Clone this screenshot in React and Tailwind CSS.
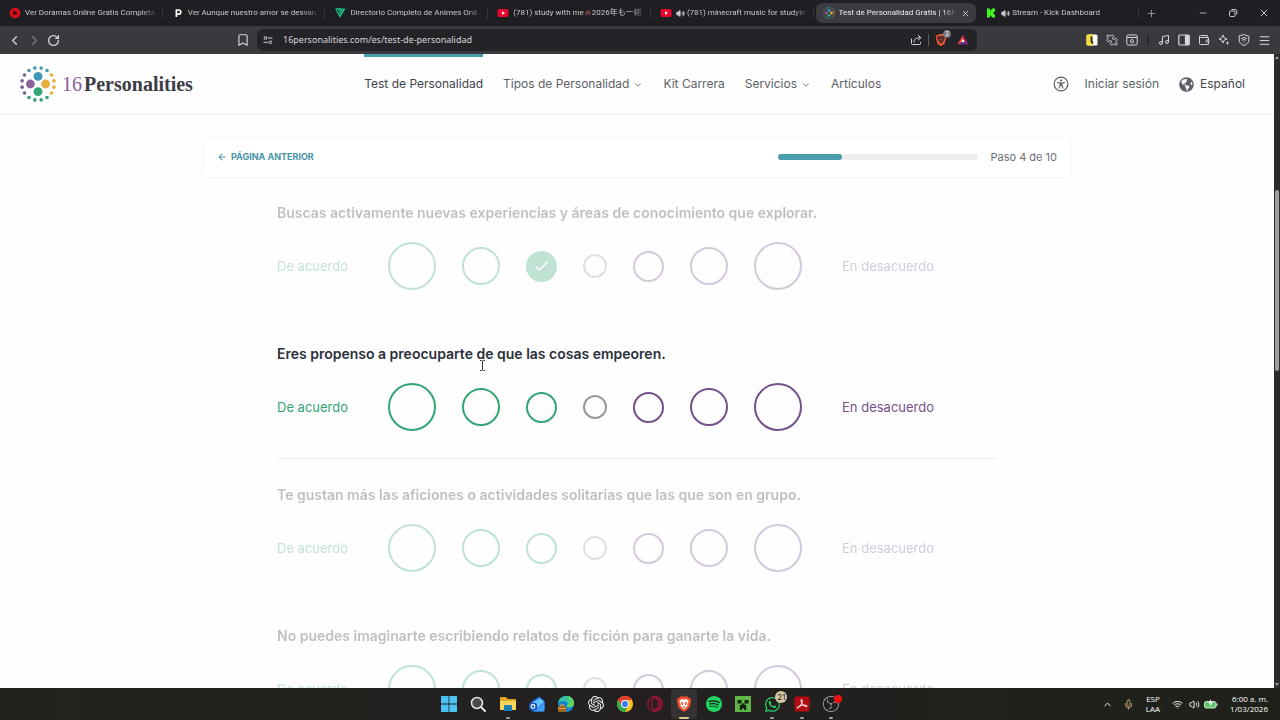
import {
  ArrowLeft, Bookmark, Check, ChevronDown, ChevronLeft, ChevronRight, ChevronUp, Menu, Mic, Minus,
  Music, Plus, Puzzle, RotateCw, Sparkles, Volume2, Wallet, Wifi, X,
} from 'lucide-react';
import { FaGlobeAmericas, FaWhatsapp } from 'react-icons/fa';
import { SiBrave, SiObsstudio, SiOpenai, SiSpotify } from 'react-icons/si';

const LogoMark = ({ className }) => {
  const colors = ['#4298b4', '#4298b4', '#e4ae3a', '#e4ae3a', '#e4ae3a', '#e4ae3a', '#33a474', '#33a474',
    '#33a474', '#33a474', '#7d5b8f', '#7d5b8f', '#7d5b8f', '#7d5b8f', '#4298b4', '#4298b4'];
  return (
    <svg viewBox="0 0 36 36" className={className} aria-hidden="true">
      {colors.map((color, i) => {
        const angle = ((i + 0.5) * Math.PI) / 8;
        return <circle key={i} cx={18 + 16.2 * Math.sin(angle)} cy={18 - 16.2 * Math.cos(angle)} r="1.8" fill={color} />;
      })}
      <circle cx="18" cy="10.4" r="4.4" fill="#4298b4" />
      <circle cx="10.4" cy="18" r="4.4" fill="#88619a" />
      <circle cx="25.6" cy="18" r="4.4" fill="#e4ae3a" />
      <circle cx="18" cy="25.6" r="4.4" fill="#33a474" />
    </svg>
  );
};

const YouTubeIcon = () => (
  <svg viewBox="0 0 12 12" className="size-3 shrink-0">
    <rect x="0.5" y="2" width="11" height="8" rx="2" fill="#e8052e" />
    <path d="M5 4.3v3.4L8 6z" fill="#fff" />
  </svg>
);

const DoramasIcon = () => (
  <svg viewBox="0 0 12 12" className="size-3 shrink-0">
    <circle cx="6" cy="6" r="5.3" fill="#d90f17" />
    <path d="M4.3 3.3v5.4L8.8 6z" fill="#3a0508" />
  </svg>
);

const LetterIcon = () => (
  <svg viewBox="0 0 12 12" className="size-3 shrink-0">
    <path d="M4.4 10V3h2.3a2 2 0 0 1 0 4.2H4.6" fill="none" stroke="#fff" strokeWidth="1.7" />
  </svg>
);

const AnimeIcon = () => (
  <svg viewBox="0 0 12 12" className="size-3 shrink-0">
    <path d="M1.5 2h5L5 4.5M2.5 3.5L6 9.5l4.3-7.3H8.3L5.5 7" fill="none" stroke="#19d08f" strokeWidth="1.3" />
  </svg>
);

const KickIcon = () => (
  <svg viewBox="0 0 12 12" className="size-3 shrink-0">
    <path d="M2 1.5h3v2h1v-1h1v-1h3v3H9v1H8v1h1v1h1v3H7v-1H6v-1H5v2H2z" fill="#3dfa1c" />
  </svg>
);

const tabs = [
  { icon: <DoramasIcon />, title: 'Ver Doramas Online Gratis Completa' },
  { icon: <LetterIcon />, title: 'Ver Aunque nuestro amor se desvan' },
  { icon: <AnimeIcon />, title: 'Directorio Completo de Animes Onli' },
  { icon: <YouTubeIcon />, title: '(781) study with me', extra: '2026年も一緒' },
  { icon: <YouTubeIcon />, title: '(781) minecraft music for studyin', sound: true },
  { icon: <LogoMark className="size-3 shrink-0" />, title: 'Test de Personalidad Gratis | 16P', active: true },
  { icon: <KickIcon />, title: 'Stream - Kick Dashboard', sound: true },
];

const TabStrip = () => (
  <div className="flex h-[26px] shrink-0 items-center bg-[#1f1e23] text-[#c9c9cc]">
    <div className="flex min-w-0 flex-1">
      {tabs.map((tab) => (
        <div key={tab.title} className="min-w-0 flex-1 pl-0.5">
          <div className={`flex h-5 items-center gap-1 rounded-md pl-[7px] ${tab.active ? 'bg-[#3c3b41] pr-1.5 text-[#eeeeee]' : ''}`}>
            {tab.icon}
            <button
              type="button"
              className="flex min-w-0 flex-1 items-center overflow-hidden whitespace-nowrap text-left font-['Roboto','Noto_Sans_CJK_JP',sans-serif] text-[8px] leading-3 [mask-image:linear-gradient(to_right,black_88%,transparent)]"
            >
              {tab.sound && <Volume2 size={9} fill="currentColor" className="mr-0.5 shrink-0" />}
              {tab.title}
              {tab.extra && (
                <>
                  <svg viewBox="0 0 9 9" className="size-2 shrink-0">
                    <path d="M1 4l3-2 2-1 1 2 1 2-2 1v2H5V6H3v2H2z" fill="#6d3b3b" />
                  </svg>
                  {tab.extra}
                </>
              )}
            </button>
            {tab.active ? <X size={9} className="shrink-0" /> : <span className="h-3 w-px shrink-0 bg-[#34343a]" />}
          </div>
        </div>
      ))}
    </div>
    <div className="flex w-[141px] shrink-0 items-center pl-[7px] pr-2.5">
      <button type="button" aria-label="Nueva pestaña" className="text-[#9a9a9e]"><Plus size={11} strokeWidth={2} /></button>
      <div className="ml-auto flex items-center gap-5">
        <button type="button" aria-label="Minimizar"><Minus size={10} strokeWidth={2} /></button>
        <button type="button" aria-label="Restaurar">
          <svg viewBox="0 0 10 10" className="size-2.5" fill="none" stroke="currentColor">
            <rect x="1.5" y="3" width="5.5" height="5.5" rx="1" />
            <path d="M3.5 1.5h3.5a1.8 1.8 0 0 1 1.8 1.8v3.2" />
          </svg>
        </button>
        <button type="button" aria-label="Cerrar"><X size={12} strokeWidth={2} /></button>
      </div>
    </div>
  </div>
);

const Toolbar = () => (
  <div className="flex h-7 shrink-0 items-center bg-[#3a393e] text-[#d6d6d9]">
    <div className="flex w-[257px] shrink-0 items-center gap-[5px] px-[7px]">
      <button type="button" aria-label="Atrás"><ChevronLeft size={15} /></button>
      <button type="button" aria-label="Adelante" className="text-[#7b7b80]"><ChevronRight size={15} /></button>
      <button type="button" aria-label="Recargar"><RotateCw size={13} strokeWidth={2.4} /></button>
      <button type="button" aria-label="Marcador" className="ml-auto"><Bookmark size={14} /></button>
    </div>
    <div className="flex h-[22px] min-w-0 flex-1 items-center rounded-md bg-[#242328] pl-1.5 pr-2">
      <svg viewBox="0 0 10 10" className="size-2.5 shrink-0" fill="none" stroke="currentColor">
        <circle cx="2.5" cy="3" r="1.4" />
        <path d="M5 3h4.5M0.5 7.3H5" />
        <circle cx="7.4" cy="7.3" r="1.4" />
      </svg>
      <input
        type="text"
        aria-label="Dirección"
        defaultValue="16personalities.com/es/test-de-personalidad"
        className="ml-2.5 min-w-0 flex-1 bg-transparent font-['Noto_Sans',sans-serif] text-[9px] leading-3 outline-none"
      />
      <div className="flex items-center gap-1.5">
        <button type="button" aria-label="Compartir">
          <svg viewBox="0 0 12 12" className="size-3" fill="none" stroke="currentColor" strokeLinecap="round" strokeLinejoin="round">
            <path d="M1.5 5v4.5a1 1 0 0 0 1 1h7a1 1 0 0 0 1-1V8.5M4 8c0-3 2-4.3 6.5-4.3M8.3 1.3l2.5 2.4-2.5 2.3" />
          </svg>
        </button>
        <span className="h-3 w-px bg-[#5a5a60]" />
        <button type="button" aria-label="Brave Shields" className="relative mr-1 text-[#f0582d]">
          <SiBrave size={12} />
          <span className="absolute -right-1 -top-1 flex size-2 items-center justify-center rounded-full bg-[#77777c] text-[6px] leading-none text-white">2</span>
        </button>
        <button type="button" aria-label="Brave Rewards">
          <svg viewBox="0 0 12 12" className="size-3">
            <path d="M6 1L0.5 10.5h11z" fill="#662d91" />
            <path d="M6 1L0.5 10.5 6 7.3z" fill="#ff4724" />
            <path d="M6 1v6.3l5.5 3.2z" fill="#9e1f63" />
            <path d="M6 5l-1.8 3h3.6z" fill="#fff" />
          </svg>
        </button>
      </div>
    </div>
    <div className="flex w-[303px] shrink-0 items-center justify-end gap-2 pr-[9px]">
      <button type="button" aria-label="Extensión">
        <svg viewBox="0 0 12 12" className="size-3">
          <rect x="0.5" y="0.5" width="11" height="11" rx="1.5" fill="#fff" />
          <path d="M2 0.5h5v11H2A1.5 1.5 0 0 1 .5 10V2A1.5 1.5 0 0 1 2 .5z" fill="#f4df35" />
          <path d="M5.5 2.5v5.2L7 9.3" fill="none" stroke="#222" strokeWidth="1.8" />
        </svg>
      </button>
      <button type="button" aria-label="Extensiones">
        <Puzzle size={12} className="-scale-x-100" />
      </button>
      <button type="button" aria-label="Buscar pestañas">
        <svg viewBox="0 0 12 12" className="size-3" fill="none" stroke="currentColor">
          <rect x="0.8" y="1" width="10.4" height="10" rx="1.5" />
          <path d="M1 3.5h10M7 8.2l1.2 1.2" />
          <circle cx="5.8" cy="7" r="1.5" />
        </svg>
      </button>
      <span className="mx-px h-3 w-0.5 bg-[#2b2b30]" />
      <button type="button" aria-label="Música"><Music size={12} /></button>
      <button type="button" aria-label="Panel lateral">
        <svg viewBox="0 0 12 12" className="size-3" fill="none" stroke="currentColor" strokeWidth="1.2">
          <rect x="0.8" y="1" width="10.4" height="10" rx="1" />
          <path d="M7.5 1.5h3.2v9H7.5z" fill="currentColor" />
        </svg>
      </button>
      <button type="button" aria-label="Billetera"><Wallet size={12} /></button>
      <button type="button" aria-label="Leo">
        <svg viewBox="0 0 12 12" className="size-3" fill="none" stroke="currentColor" strokeLinejoin="round">
          <path d="M5 1l1.2 2.800L9 5 6.200 6.200 5 9 3.800 6.200 1 5l2.800-1.200z" />
          <path d="M9.500 6.800l.6 1.600 1.600.6-1.600.6-.6 1.600-.6-1.600-1.600-.6 1.600-.6z" fill="currentColor" stroke="none" />
        </svg>
      </button>
      <button type="button" aria-label="VPN">
        <svg viewBox="0 0 12 12" className="size-3" fill="none" stroke="currentColor" strokeLinecap="round">
          <path d="M6 0.7l4.8 1.5v4c0 2.5-2.2 4.2-4.8 5.3C3.4 10.4 1.2 8.7 1.2 6.2v-4z" />
          <path d="M3.3 4.5c1.7-1.2 3.7-1.2 5.4 0M4.3 6.2c1.1-.8 2.3-.8 3.4 0M6 8v.1" />
        </svg>
      </button>
      <button type="button" aria-label="Menú"><Menu size={13} /></button>
    </div>
  </div>
);

const navItems = [
  { label: 'Test de Personalidad', active: true },
  { label: 'Tipos de Personalidad', menu: true },
  { label: 'Kit Carrera' },
  { label: 'Servicios', menu: true },
  { label: 'Artículos' },
];

const SiteHeader = () => (
  <header className="flex h-[61px] items-stretch justify-between border-b border-[#f1f1f2] pl-5 pr-[29px] text-[12px] leading-5 text-[#5c5f66]">
    <a href="#inicio" className="flex items-center gap-[6px]">
      <LogoMark className="size-9" />
      <span className="font-['Liberation_Serif',serif] text-[20px] font-bold leading-6 text-[#3c3c46]">
        <span className="mr-0.5 font-normal text-[#88619a]">16</span>
        Personalities
      </span>
    </a>
    <nav className="flex gap-5">
      {navItems.map((item) => (
        <a
          key={item.label}
          href="#nav"
          className={`flex items-center gap-1 border-y-3 border-b-transparent ${item.active ? 'border-t-[#4a9dab] text-[#40434b]' : 'border-t-transparent'}`}
        >
          {item.label}
          {item.menu && <ChevronDown size={10} className="mt-0.5" />}
        </a>
      ))}
    </nav>
    <div className="flex items-center gap-4">
      <button type="button" aria-label="Accesibilidad">
        <svg viewBox="0 0 16 16" className="size-4" fill="none" stroke="currentColor" strokeLinecap="round">
          <circle cx="8" cy="8" r="6.9" strokeWidth="1.2" />
          <circle cx="8" cy="4.5" r="1.1" fill="currentColor" stroke="none" />
          <path d="M4.5 6.5l2.5.6h2l2.5-.6M7.3 7.3l-.2 2.2-1 2.7M8.7 7.3l.2 2.2 1 2.7M8 7.3v2" strokeWidth="1.1" />
        </svg>
      </button>
      <a href="#sesion">Iniciar sesión</a>
      <button type="button" className="ml-1 flex items-center gap-1.5 text-[#40434b]">
        <FaGlobeAmericas size={15} className="text-[#5c5f66]" />
        Español
      </button>
    </div>
  </header>
);

const StepBar = () => (
  <div className="mx-auto mt-[22px] flex h-10 max-w-[866px] items-center justify-between bg-white px-[13px] shadow-[0_0_5px_rgba(0,0,0,0.06)]">
    <button type="button" className="flex items-center gap-1 text-[9px] font-bold leading-4 text-[#4795a5]">
      <ArrowLeft size={10} strokeWidth={2.5} />
      PÁGINA ANTERIOR
    </button>
    <div className="flex items-center gap-3">
      <div
        role="progressbar"
        aria-label="Progreso"
        aria-valuenow={32}
        className="h-1.5 w-[200px] rounded-full bg-[#eeeeef]"
      >
        <div className="h-full rounded-full bg-[#4a9dab]" style={{ width: '32%' }} />
      </div>
      <span className="text-[11px] leading-4 text-[#6b6e75]">Paso 4 de 10</span>
    </div>
  </div>
);

const options = [
  { size: 'size-12', color: 'border-[#33a474]', label: 'Muy de acuerdo' },
  { size: 'size-[38px]', color: 'border-[#33a474]', label: 'De acuerdo' },
  { size: 'size-[31px]', color: 'border-[#33a474]', label: 'Algo de acuerdo' },
  { size: 'size-6', color: 'border-[#9a9a9c]', label: 'Neutral' },
  { size: 'size-[31px]', color: 'border-[#74518a]', label: 'Algo en desacuerdo' },
  { size: 'size-[38px]', color: 'border-[#74518a]', label: 'En desacuerdo' },
  { size: 'size-12', color: 'border-[#74518a]', label: 'Muy en desacuerdo' },
];

const questions = [
  { text: 'Buscas activamente nuevas experiencias y áreas de conocimiento que explorar.', answer: 2 },
  { text: 'Eres propenso a preocuparte de que las cosas empeoren.', current: true },
  { text: 'Te gustan más las aficiones o actividades solitarias que las que son en grupo.' },
  { text: 'No puedes imaginarte escribiendo relatos de ficción para ganarte la vida.' },
];

const Question = ({ question, index }) => (
  <fieldset className={`relative border-b border-[#efeff1] pb-[27px] pt-6 ${question.current ? '' : 'opacity-30'}`}>
    <legend className="float-left w-full text-[14px] font-semibold leading-6 text-[#2b303b]">
      {question.text}
    </legend>
    <div className="clear-both flex items-center gap-10 pt-[17px] text-[13px] leading-5">
      <span className="text-[#33a474]">De acuerdo</span>
      <div className="flex items-center gap-[26px]">
        {options.map((option, i) => (
          <label key={option.label} className="relative flex">
            <input
              type="radio"
              name={`question-${index}`}
              aria-label={option.label}
              defaultChecked={question.answer === i}
              className={`appearance-none rounded-full border-2 checked:bg-[#33a474] ${option.size} ${option.color}`}
            />
            {question.answer === i && (
              <Check size={17} strokeWidth={2} className="pointer-events-none absolute inset-0 m-auto text-white" />
            )}
          </label>
        ))}
      </div>
      <span className="text-[#74518a]">En desacuerdo</span>
    </div>
    {question.current && (
      <svg viewBox="0 0 7 11" className="absolute left-[202px] top-[42px] h-[11px] w-[7px]" fill="none" stroke="#222">
        <path d="M1 .5h1.5l1 .7 1-.7H6M3.5 1v9M1 10.5h1.5l1-.7 1 .7H6" strokeWidth="0.9" />
      </svg>
    )}
  </fieldset>
);

const Scrollbar = () => (
  <div className="flex w-1.5 shrink-0 flex-col items-center bg-[#2c2c2c]">
    <span className="mt-0.5 border-x-2 border-b-3 border-x-transparent border-b-[#9d9d9d]" />
    <span className="grow-[131]" />
    <span className="w-1 grow-[181] rounded-full bg-[#9d9d9d]" />
    <span className="grow-[312]" />
    <span className="mb-0.5 border-x-2 border-t-3 border-x-transparent border-t-[#9d9d9d]" />
  </div>
);

const BraveAppIcon = () => (
  <svg viewBox="0 0 16 16" className="size-4">
    <path d="M4.5 0.5h7l1.3 1.4 1.4.2.8 2-.9 5.4c-.5 2.8-3.5 4.5-6.1 6.2-2.6-1.7-5.6-3.4-6.1-6.2L1 4.1l.8-2 1.4-.2z" fill="#f5502a" />
    <path d="M8 3.5l2.6-.5 2.2 2.5-1.6 2.7.5 1.5L8 13.5 4.3 9.7l.5-1.5L3.2 5.5 5.4 3z" fill="#fff" />
    <path d="M4.8 5.8l2.2.6.3 2.2L6 9.2zM11.2 5.8L9 6.4l-.3 2.2 1.3.6zM6.5 10.8L8 10l1.5.8L8 12z" fill="#f5502a" />
  </svg>
);

const apps = [
  {
    name: 'Inicio',
    icon: (
      <svg viewBox="0 0 16 16" className="size-4">
        <path d="M0 0h7.6v7.6H0zM8.4 0H16v7.6H8.4zM0 8.4h7.6V16H0zM8.4 8.4H16V16H8.4z" fill="#4cc2f5" />
      </svg>
    ),
  },
  {
    name: 'Buscar',
    icon: (
      <svg viewBox="0 0 16 16" className="size-4">
        <circle cx="7" cy="7" r="5.5" fill="#4a4a4c" stroke="#e6e6e6" strokeWidth="1.5" />
        <path d="M11 11l4 4" stroke="#e6e6e6" strokeWidth="2" strokeLinecap="round" />
      </svg>
    ),
  },
  {
    name: 'Explorador de archivos',
    open: true,
    icon: (
      <svg viewBox="0 0 16 16" className="size-4">
        <path d="M0 2a1 1 0 0 1 1-1h5l2 2h7a1 1 0 0 1 1 1v10H0z" fill="#e0a526" />
        <path d="M0 5h16v9H0z" fill="#fbd45c" />
        <path d="M4 10a1 1 0 0 1 1-1h6a1 1 0 0 1 1 1v5H4z" fill="#1b7fb8" />
      </svg>
    ),
  },
  {
    name: 'Outlook',
    icon: (
      <svg viewBox="0 0 16 16" className="size-4">
        <path d="M2 6l8-5.5L15.5 5v9a1.5 1.5 0 0 1-1.5 1.5H4A1.5 1.5 0 0 1 2.5 14z" fill="#1f6fe0" />
        <path d="M3 7l8-5 4 4-7 6z" fill="#63c3ff" />
        <path d="M15.5 6v8a1.5 1.5 0 0 1-1.5 1.5H5z" fill="#3f9cf5" />
        <rect x="0" y="7" width="8" height="7" rx="1.5" fill="#1453b8" />
        <circle cx="4" cy="10.5" r="1.9" fill="none" stroke="#fff" strokeWidth="1.1" />
      </svg>
    ),
  },
  {
    name: 'Edge',
    icon: (
      <svg viewBox="0 0 16 16" className="size-4">
        <circle cx="8" cy="8" r="8" fill="#1583d0" />
        <path d="M0 7C1 2.5 4.5 0 8.5 0 13 0 16 3.5 16 7c0 3-2.5 4.3-5 4.3-1.8 0-2.5-.8-1.8-1.8C10.5 7 8 5 5 5 3 5 1 6 0 7z" fill="#35c5a0" />
        <path d="M9 0c4 0 7 3.5 7 7 0 3-2.5 4.3-5 4.3-1.8 0-2.3-.6-1.8-1.8C13 8 12 3 9 0z" fill="#61d45b" />
        <rect x="0" y="10" width="8" height="6" rx="1" fill="#a2631f" />
        <path d="M2.5 10V8.8h3V10M0 12.5h8" stroke="#e0a04a" fill="none" />
      </svg>
    ),
  },
  { name: 'ChatGPT', icon: <SiOpenai size={16} className="text-[#eeeeee]" /> },
  {
    name: 'Chrome',
    icon: (
      <svg viewBox="0 0 16 16" className="size-4">
        <circle cx="8" cy="8" r="8" fill="#fbc116" />
        <path d="M1.07 4A8 8 0 0 1 14.93 4H8a4 4 0 0 0-3.46 6z" fill="#e33b2e" />
        <path d="M1.07 4A8 8 0 0 0 8 16l3.46-6A4 4 0 0 1 4.54 10z" fill="#2da94f" />
        <circle cx="8" cy="8" r="4" fill="#fff" />
        <circle cx="8" cy="8" r="3.1" fill="#3b7ded" />
      </svg>
    ),
  },
  {
    name: 'Opera GX',
    icon: (
      <svg viewBox="0 0 16 16" className="size-4" fill="none" stroke="#a8143c" strokeWidth="1.2">
        <circle cx="8" cy="8" r="7.3" />
        <ellipse cx="8" cy="8" rx="3.2" ry="5.8" />
        <path d="M8 2.2c3.5-1 5.5 2 5.5 5.8s-2 6.8-5.5 5.8" />
      </svg>
    ),
  },
  { name: 'Brave', open: true, active: true, icon: <BraveAppIcon /> },
  { name: 'Spotify', icon: <SiSpotify size={16} className="text-[#1ed760]" /> },
  {
    name: 'Minecraft',
    icon: (
      <svg viewBox="0 0 16 16" className="size-4">
        <path d="M0 0h16v16H0z" fill="#5fb545" />
        <path d="M2.5 4h4v3.5h-4zM9.5 4h4v3.5h-4zM6.5 7.5h3V9h1.7v5h-2v-1.5H6.8V14h-2V9h1.7z" fill="#10240d" />
      </svg>
    ),
  },
  { name: 'WhatsApp', open: true, badge: '21', icon: <FaWhatsapp size={17} className="text-[#25d366]" /> },
  {
    name: 'Acrobat',
    open: true,
    icon: (
      <svg viewBox="0 0 16 16" className="size-4">
        <rect x="0.5" y="0.5" width="15" height="15" rx="2.5" fill="#b30b12" />
        <path d="M7.3 3.5c2 0 .8 3.5-1 6.2-1.5 2.3-3 3-3.2 2.2-.3-1 3.5-2.5 6.5-2.7 3-.2 4 .6 3.5 1.2-.6.8-3.2-.3-4.8-2.6-1.4-2-1.9-4.3-1-4.3z" fill="none" stroke="#fff" />
      </svg>
    ),
  },
  { name: 'OBS Studio', open: true, recording: true, icon: <SiObsstudio size={16} className="text-[#b9b9ba]" /> },
];

const Taskbar = () => (
  <footer className="flex h-8 shrink-0 items-center bg-linear-to-r from-[#22241c] via-[#242021] to-[#1e2119] text-white">
    <div className="flex-1 pl-3" />
    <div className="grid w-[412px] grid-cols-14">
      {apps.map((app) => (
        <button
          key={app.name}
          type="button"
          aria-label={app.name}
          className={`relative mx-auto flex h-[30px] w-[26px] items-center justify-center rounded ${app.active ? 'bg-[#353234]' : ''}`}
        >
          {app.icon}
          {app.badge && (
            <span className="absolute right-0 top-0.5 flex size-3 translate-x-0.5 items-center justify-center rounded-full bg-[#d8c7a2] text-[8px] leading-none text-[#222]">
              {app.badge}
            </span>
          )}
          {app.recording && <span className="absolute right-0.5 top-1.5 size-2 rounded-full bg-[#ee1111]" />}
          {app.open && (
            <span className={`absolute inset-x-0 bottom-0 mx-auto h-0.5 rounded-full ${app.active ? 'w-2.5 bg-[#e3c391]' : 'w-1 bg-[#a3a09d]'}`} />
          )}
        </button>
      ))}
    </div>
    <div className="flex flex-1 items-center justify-end pr-3 font-['Open_Sans',sans-serif] text-[8px] leading-[10px]">
      <button type="button" aria-label="Iconos ocultos"><ChevronUp size={11} /></button>
      <Mic size={11} className="ml-2.5 text-[#c9ae7c]" />
      <span className="ml-3 text-center">ESP<br />LAA</span>
      <Wifi size={11} className="ml-3" />
      <Volume2 size={11} className="ml-1.5" />
      <svg viewBox="0 0 14 11" className="ml-1 h-[11px] w-3.5">
        <rect x="0.5" y="2.5" width="11.5" height="6.5" rx="1.8" fill="#5fc46b" stroke="#cfe8d0" />
        <path d="M13 4.5v2.5" stroke="#cfe8d0" />
        <path d="M7 0L4.5 4.5h2L6 7.5l3-4.3H7z" fill="#fff" />
      </svg>
      <span className="ml-3 text-right">6:00 a. m.<br />1/03/2026</span>
    </div>
  </footer>
);

const App = () => (
  <div className="flex h-screen flex-col overflow-hidden font-['Inter',sans-serif]">
    <TabStrip />
    <Toolbar />
    <div className="flex min-h-0 flex-1 bg-[#fefefe]">
      <main className="min-w-0 flex-1 overflow-hidden">
        <SiteHeader />
        <StepBar />
        <form className="mx-auto max-w-[720px]">
          {questions.map((question, i) => (
            <Question key={question.text} question={question} index={i} />
          ))}
        </form>
      </main>
      <Scrollbar />
    </div>
    <Taskbar />
  </div>
);

export default App;
